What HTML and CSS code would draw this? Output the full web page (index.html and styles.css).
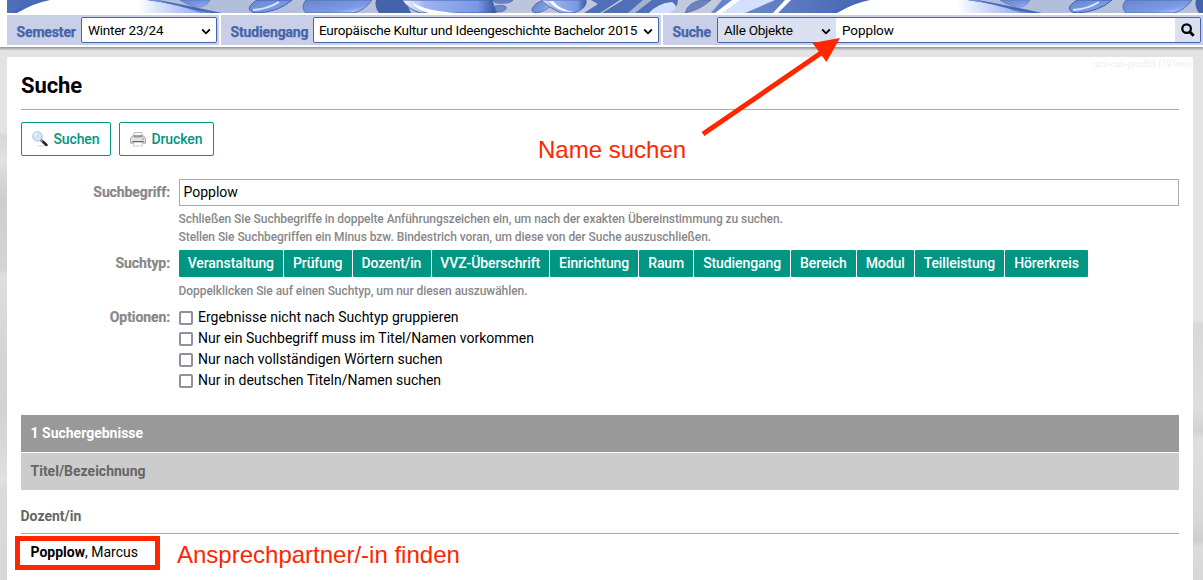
FILE: index.html
```html
<!DOCTYPE html>
<html lang="de">
<head>
<meta charset="utf-8">
<title>Suche</title>
<link rel="stylesheet" href="styles.css">
</head>
<body>
<header class="top">
  <svg class="banner" width="1196" height="13" viewBox="7 0 1196 13" aria-hidden="true">
    <defs>
      <linearGradient id="blue" x1="0" y1="0" x2="1" y2="1"><stop offset="0" stop-color="#6885cc"/><stop offset=".65" stop-color="#7c9ae6"/><stop offset="1" stop-color="#d4e0ff"/></linearGradient>
      <linearGradient id="deep" x1="0" x2="1"><stop offset="0" stop-color="#6b87c8"/><stop offset="1" stop-color="#4162b1"/></linearGradient>
      <linearGradient id="dome" x1="0" x2="1"><stop offset="0" stop-color="#fff"/><stop offset=".65" stop-color="#fff"/><stop offset="1" stop-color="#91aaf0"/></linearGradient>
      <linearGradient id="gloss" x1="0" x2="1"><stop offset="0" stop-color="#f5f8ff"/><stop offset=".25" stop-color="#9db3ef"/><stop offset=".8" stop-color="#7998e5"/><stop offset="1" stop-color="#3657a5"/></linearGradient>
      <linearGradient id="ground" x1="0" x2="1"><stop offset="0" stop-color="#a9b7db"/><stop offset="1" stop-color="#c8cddd"/></linearGradient>
      <g id="drops">
        <rect x="-40" width="860" height="13" fill="url(#ground)"/>
        <path d="M-45 0H58L26 13H-75Z" fill="url(#deep)"/>
        <path d="M10 13Q28 3 46 0H158Q190 6 222 13Z" fill="#4767b6"/>
        <path d="M17 13Q34 3 50 0H147Q178 4 202 13Z" fill="url(#dome)"/>
        <path d="M158 0Q180 8 212 13H202Q179 4 147 0Z" fill="#6e8ee0"/>
        <path d="M180 0H210Q206 8 195 7Q186 4 180 0Z" fill="url(#blue)" stroke="#5673bb" stroke-width=".7"/>
        <path d="M257 0H292Q279 12 256 13Q242 10 257 0Z" fill="url(#blue)" stroke="#405fab" stroke-width="1"/>
        <path d="M253 10Q268 9 279 2" fill="none" stroke="#dce6ff" stroke-width="2"/>
        <path d="M306 0H372Q366 9 354 13H306Q300 7 306 0Z" fill="url(#blue)" stroke="#526fb6" stroke-width="1"/>
        <path d="M376 0H405L411 13H379Q374 6 376 0Z" fill="#4563aa"/>
        <path d="M402 0H492L496 13H420Q408 9 402 0Z" fill="url(#gloss)" stroke="#4261ab"/>
        <path d="M412 2Q424 11 458 13H429Q416 10 412 2Z" fill="#fff"/>
        <path d="M492 0H513Q511 4 496 3ZM495 6Q508 4 506 9Q504 12 496 12Z" fill="#6d89cb" stroke="#4563a7" stroke-width=".7"/>
        <ellipse cx="542" cy="6" rx="11" ry="5" transform="rotate(-27 542 6)" fill="url(#blue)" stroke="#405da1" stroke-width=".7"/>
        <path d="M541 0H586Q588 8 574 13H561Q549 8 541 0Z" fill="url(#gloss)" stroke="#5270b3"/>
        <path d="M553 1Q559 9 573 12Q558 13 549 1Z" fill="#fff"/>
        <path d="M591 0H620L600 13H584L598 4ZM623 0H678Q678 8 669 13H602Z" fill="#516fb6"/>
        <path d="M643 0L628 13H635L652 0Z" fill="#a4b1d1"/>
        <path d="M649 13Q658 3 672 2Q681 8 669 13Z" fill="#d2ddff"/>
        <path d="M685 13Q688 2 702 0H711Q700 10 685 13Z" fill="#6a82bd" stroke="#5068a2" stroke-width=".7"/>
        <path d="M722 0H779L768 13H711Z" fill="#6582d1"/>
        <path d="M738 0H777L768 13H721Z" fill="#d4e0ff"/>
        <path d="M732 0H740L722 13H715Z" fill="#fff"/>
      </g>
    </defs>
    <g class="soft"><use href="#drops"/><use href="#drops" x="820"/><path d="M785 0H791L778 13H773Z" fill="#fff"/></g>
  </svg>
  <div class="bar">
    <div class="group semester"><span class="tag">Semester</span><div class="select"><span>Winter 23/24</span><svg class="chev" viewBox="0 0 10 7"><path d="M1.2 1.5 5 5.3 8.8 1.5"/></svg></div></div>
    <div class="group course"><span class="tag">Studiengang</span><div class="select"><span>Europäische Kultur und Ideengeschichte Bachelor 2015</span><svg class="chev" viewBox="0 0 10 7"><path d="M1.2 1.5 5 5.3 8.8 1.5"/></svg></div></div>
    <div class="group find"><span class="tag">Suche</span><div class="searchbox"><div class="kind"><span>Alle Objekte</span><svg class="chev" viewBox="0 0 10 7"><path d="M1.2 1.5 5 5.3 8.8 1.5"/></svg></div><div class="query">Popplow</div><div class="go"><svg width="14" height="14" viewBox="0 0 14 14"><circle cx="5.6" cy="5.6" r="4.3" fill="none" stroke="#000" stroke-width="2.2"/><path d="M8.7 8.7 12.7 12.7" stroke="#000" stroke-width="2.8"/></svg></div></div></div>
  </div>
</header>
<main class="page">
  <div class="server">scc-cas-prod03 (191ms)</div>
  <h1>Suche</h1>
  <div class="actions">
    <div class="button b1"><svg width="16" height="16" viewBox="0 0 16 16"><ellipse cx="10" cy="14.7" rx="5" ry=".8" fill="#ddd"/><path d="m9 9 5.5 5" stroke="#222" stroke-width="2.4" stroke-linecap="round"/><path d="m8.5 8.5 2 2" stroke="#aaa" stroke-width="1.5"/><circle cx="5.5" cy="5.4" r="4.7" fill="#cfe5f8" stroke="#b4bdc7"/><path d="M2.5 5Q3 2.2 6 2.3" fill="none" stroke="#f4faff" stroke-width="1.3"/></svg>Suchen</div>
    <div class="button b2"><svg width="16" height="16" viewBox="0 0 16 16"><path d="M4 5V1.5h8V5" fill="#fafafa" stroke="#bbb"/><path d="M3 4.5h10l2.5 3v4.7H.5V7.5Z" fill="#e2e2e2" stroke="#888" stroke-width=".7"/><path d="M3.5 5.8h9" stroke="#777" stroke-width="1"/><path d="M2.5 10.7h11" stroke="#555" stroke-width="1.4"/><path d="M4 11.2h8l.8 3.8H3.2Z" fill="#fff" stroke="#bbb" stroke-width=".7"/><path d="M12.5 8h1.5" stroke="#d55"/></svg>Drucken</div>
  </div>
  <div class="form">
    <div class="label first">Suchbegriff:</div>
    <div><div class="field">Popplow</div><div class="hint terms">Schließen Sie Suchbegriffe in doppelte Anführungszeichen ein, um nach der exakten Übereinstimmung zu suchen.<br>Stellen Sie Suchbegriffen ein Minus bzw. Bindestrich voran, um diese von der Suche auszuschließen.</div></div>
    <div class="label">Suchtyp:</div>
    <div><div class="types"><span>Veranstaltung</span><span>Prüfung</span><span>Dozent/in</span><span>VVZ-Überschrift</span><span>Einrichtung</span><span>Raum</span><span>Studiengang</span><span>Bereich</span><span>Modul</span><span>Teilleistung</span><span>Hörerkreis</span></div><div class="hint dbl">Doppelklicken Sie auf einen Suchtyp, um nur diesen auszuwählen.</div></div>
    <div class="label opt">Optionen:</div>
    <div class="options">
      <label><i></i><span>Ergebnisse nicht nach Suchtyp gruppieren</span></label>
      <label><i></i><span>Nur ein Suchbegriff muss im Titel/Namen vorkommen</span></label>
      <label><i></i><span>Nur nach vollständigen Wörtern suchen</span></label>
      <label><i></i><span>Nur in deutschen Titeln/Namen suchen</span></label>
    </div>
  </div>
  <div class="results">1 Suchergebnisse</div>
  <div class="columns">Titel/Bezeichnung</div>
  <h2>Dozent/in</h2>
  <div class="person"><b>Popplow</b>, Marcus</div>
</main>
<svg class="arrow" width="150" height="110" viewBox="695 30 150 110"><path d="M703 134 824 51" stroke="#ff2600" stroke-width="5"/><path d="M840 38 812.5 43 826.5 62Z" fill="#ff2600"/></svg>
<div class="note name">Name suchen</div>
<div class="frame"></div>
<div class="note contact">Ansprechpartner/-in finden</div>
</body>
</html>
```
FILE: styles.css
```css
* { box-sizing: border-box; }
body {
  margin: 0;
  width: 1203px;
  height: 580px;
  overflow: hidden;
  position: relative;
  font: 14px/20px Roboto, sans-serif;
  color: #000;
  background: linear-gradient(#e3e3e3 0 133px, #d7d7d7 135px, #e2e2e2 160px, #d8d8d8 175px, #cecece 200px, #d4d4d4 270px, #dedede 275px, #d5d5d5 350px, #d2d2d2 410px, #d9d9d9 450px, #e2e2e2 480px, #dadada 490px, #d8d8d8) left / 7px 100% no-repeat,
    linear-gradient(#e3e3e3 0 320px, #d8d8d8 325px, #dedede 410px, #d1d1d1 430px, #dfdfdf 440px, #d8d8d8 520px, #cecece 540px, #dcdcdc 548px, #d7d7d7) right / 10px 100% no-repeat, #e3e3e3;
}
.top { height: 47px; padding-left: 7px; background: #fff; box-shadow: 0 1px 2px 1px #999; }
.banner { display: block; }
.soft { filter: blur(.45px); }
.bar { display: flex; gap: 2px; margin-top: 2px; height: 30px; }
.group { display: flex; background: #c8cfe7; padding-top: 2px; }
.semester { width: 212px; }
.course { width: 440px; }
.find { flex: 1; padding-right: 2px; }
.tag { font-weight: 700; color: #4664aa; line-height: 30px; letter-spacing: -.15px; padding-left: 9.5px; flex: none; -webkit-text-stroke: .25px #4664aa; }
.semester .tag { width: 74px; }
.course .tag { width: 92px; }
.find .tag { width: 54px; }
.select, .searchbox { font-size: 13.5px; letter-spacing: -.24px; }
.select { border: 1px solid #4664aa; border-radius: 2px; background: #fff; height: 26px; display: flex; align-items: center; justify-content: space-between; padding: 0 5px 0 6px; white-space: nowrap; }
.semester .select { width: 136px; }
.course .select { width: 346px; padding-left: 5px; }
.chev { width: 10px; height: 7px; flex: none; fill: none; stroke: #000; stroke-width: 1.8; margin-top: 2px; }
.searchbox { flex: 1; height: 26px; border: 1px solid #4664aa; border-radius: 2px; display: flex; background: #fff; overflow: hidden; line-height: 25px; }
.kind { width: 118px; background: #dae0ef; display: flex; justify-content: space-between; align-items: center; padding: 0 5px 0 6px; }
.query { flex: 1; padding-left: 6px; letter-spacing: -.1px; }
.go { width: 25px; background: #dae0ef; display: flex; justify-content: center; align-items: center; }

.page { margin: 10px 10px 0 7px; height: 523px; padding: 0 14px; background: #fff; }
.server { height: 14px; margin-right: -13px; text-align: right; font-size: 9px; line-height: 14px; color: #eee; }
h1 { margin: 0; height: 39px; border-bottom: 1px solid #aaa; font-size: 22px; line-height: 29px; letter-spacing: -.1px; }
.actions { display: flex; gap: 8px; margin-top: 12px; }
.button { height: 34px; border: 1px solid #009682; border-radius: 2px; display: flex; align-items: center; gap: 5.5px; padding-left: 10px; color: #009682; font-weight: 500; letter-spacing: -.12px; }
.b1 { width: 90px; }
.b2 { width: 95px; }
.form { display: grid; grid-template-columns: 149px 1000px; column-gap: 9px; margin-top: 23px; }
.label { text-align: right; font-weight: 700; color: #888; line-height: 26px; letter-spacing: -.1px; -webkit-text-stroke: .2px #888; }
.field { height: 27px; border: 1px solid #aaa; line-height: 25px; padding-left: 3.5px; }
.hint { font-size: 12px; line-height: 18px; color: #888; font-weight: 500; white-space: nowrap; letter-spacing: -.06px; margin-left: -.5px; }
.terms { height: 44px; padding-top: 4px; }
.types { display: flex; gap: 1px; }
.types span { background: #009682; color: #fff; font-weight: 500; line-height: 27px; padding: 0 9.3px 0 8.7px; border-radius: 1px; letter-spacing: -.09px; }
.dbl { padding-top: 5px; height: 30px; }
.label.opt { line-height: 20px; }
.options label { display: flex; align-items: center; gap: 5px; height: 21px; }
.options span { line-height: 21px; height: 22px; }
.options i { width: 14px; height: 14px; border: 2px solid #8f8f9d; border-radius: 2px; }
.results { height: 37px; line-height: 37px; padding-left: 9.5px; background: #999; color: #fff; font-weight: 700; margin-top: 24px; }
.columns { margin-top: 1px; height: 37px; line-height: 37px; padding-left: 9.5px; background: #ccc; color: #666; font-weight: 700; }
h2 { margin: 16px 0 0; height: 28px; line-height: 20px; font-size: 14px; color: #666; border-bottom: 1px solid #aaa; text-indent: -.5px; }
.person { padding: 8px 9.5px; }
.person b { font-weight: 700; }

.arrow, .note, .frame { position: absolute; }
.arrow { left: 695px; top: 30px; }
.note { font: 24px/28px "Liberation Sans", Arial, sans-serif; color: #ff2600; white-space: nowrap; }
.name { left: 538px; top: 136px; }
.contact { left: 177px; top: 541px; }
.frame { left: 15px; top: 536px; width: 145px; height: 34px; border: 5px solid #ff2600; }
```
